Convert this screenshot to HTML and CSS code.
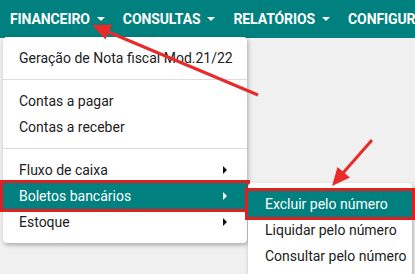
FILE: index.html
```html
<!DOCTYPE html>
<html lang="pt-BR">
<head>
    <meta charset="UTF-8">
    <title>Menu Financeiro</title>
    <link rel="stylesheet" href="styles.css">
</head>
<body>
    <header class="navbar">
        <a class="nav-item">Financeiro <span class="caret"></span></a>
        <a class="nav-item">Consultas <span class="caret"></span></a>
        <a class="nav-item">Relatórios <span class="caret"></span></a>
        <a class="nav-item">Configurações <span class="caret"></span></a>
    </header>

    <div class="page"></div>

    <!-- dropdown do menu Financeiro -->
    <ul class="dropdown">
        <li class="menu-item">Geração de Nota fiscal Mod.21/22</li>
        <li class="divider"></li>
        <li class="menu-item">Contas a pagar</li>
        <li class="menu-item">Contas a receber</li>
        <li class="divider"></li>
        <li class="menu-item has-sub">Fluxo de caixa</li>
        <li class="menu-item has-sub active marked">
            Boletos bancários
            <ul class="dropdown submenu">
                <li class="menu-item active marked">Excluir pelo número</li>
                <li class="menu-item">Liquidar pelo número</li>
                <li class="menu-item">Consultar pelo número</li>
            </ul>
        </li>
        <li class="menu-item has-sub">Estoque</li>
    </ul>

    <!-- setas de anotação -->
    <svg class="annotations" width="415" height="274" viewBox="0 0 415 274">
        <line x1="258" y1="95" x2="106" y2="31" stroke="#e82a2a" stroke-width="3"/>
        <polygon points="92,25 112,24.5 105.5,39.5" fill="#e82a2a"/>
        <line x1="372" y1="140" x2="343" y2="173" stroke="#e82a2a" stroke-width="3"/>
        <polygon points="332,186 350,177.5 337.5,167" fill="#e82a2a"/>
    </svg>
</body>
</html>
```

FILE: styles.css
```css
body {
    margin: 0;
    font-family: Roboto, "Liberation Sans", sans-serif;
    background-color: #f0f0f0;
    overflow: hidden;
    height: 274px;
    position: relative;
}
.navbar {
    display: flex;
    height: 38px;
    background-color: #00807e;
    white-space: nowrap;
    overflow: hidden;
}
.nav-item {
    display: flex;
    align-items: center;
    padding: 0 8px 0 10px;
    color: white;
    font-size: 14px;
    font-weight: bold;
    text-transform: uppercase;
    letter-spacing: -0.1px;
}
.caret {
    width: 0;
    height: 0;
    margin-left: 7px;
    border-left: 4px solid transparent;
    border-right: 4px solid transparent;
    border-top: 4px solid white;
}
.dropdown {
    position: absolute;
    top: 37px;
    left: 3px;
    width: 244px;
    margin: 0;
    padding: 8px 0;
    list-style: none;
    background-color: white;
    border-radius: 4px;
    box-shadow: 1px 2px 4px rgba(0,0,0,0.3);
    font-size: 14px;
    color: #212121;
}
.menu-item {
    position: relative;
    height: 26px;
    line-height: 26px;
    padding: 0 16px;
    white-space: nowrap;
}
.has-sub::after {
    content: "";
    position: absolute;
    right: 20px;
    top: 9px;
    border-top: 4px solid transparent;
    border-bottom: 4px solid transparent;
    border-left: 4px solid #111;
}
.menu-item.active {
    background-color: #00807e;
    color: white;
}
.menu-item.active::after {
    border-left-color: white;
}
.marked {
    outline: 3px solid #e02020;
}
.divider {
    height: 1px;
    margin: 8px 0;
    background-color: #dcdcdc;
}
.submenu {
    top: 0;
    left: 245px;
    width: 164px;
    color: #212121;
}
.submenu .menu-item {
    padding-left: 17px;
}
.annotations {
    position: absolute;
    top: 0;
    left: 0;
}
```
